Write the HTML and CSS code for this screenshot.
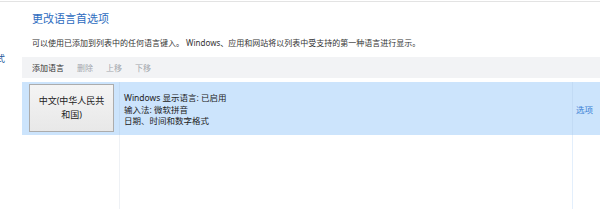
FILE: index.html
```html
<!DOCTYPE html>
<html lang="zh-CN">
<head>
    <meta charset="UTF-8">
    <meta name="viewport" content="width=device-width, initial-scale=1.0">
    <title>语言</title>
    <link rel="stylesheet" href="styles.css">
</head>
<body>
    <div class="page">
        <div class="side">
            <span class="side-item">式</span>
        </div>
        <div class="main">
            <h1 class="title">更改语言首选项</h1>
            <p class="desc">可以使用已添加到列表中的任何语言键入。 Windows、应用和网站将以列表中受支持的第一种语言进行显示。</p>

            <div class="toolbar">
                <span class="tool">添加语言</span>
                <span class="tool disabled">删除</span>
                <span class="tool disabled">上移</span>
                <span class="tool disabled">下移</span>
            </div>

            <div class="list">
                <div class="cell name selected">
                    <div class="lang-btn">中文(中华人民共和国)</div>
                </div>
                <div class="cell info selected">
                    <p>Windows 显示语言: 已启用</p>
                    <p>输入法: 微软拼音</p>
                    <p>日期、时间和数字格式</p>
                </div>
                <div class="cell opt selected">
                    <span class="link">选项</span>
                </div>

                <div class="cell name"></div>
                <div class="cell info"></div>
                <div class="cell opt"></div>
            </div>
        </div>
    </div>
</body>
</html>
```

FILE: styles.css
```css
*{
    padding: 0;
    margin: 0;
    box-sizing: border-box;
}
html, body{
    height: 100%;
    overflow: hidden;
}
body{
    background-color: #ffffff;
    font-family: "Noto Sans", "Noto Sans CJK SC", sans-serif;
    color: #2b2b2b;
}
.page{
    display: flex;
    height: 100%;
    margin-top: 1px;
    border-top: 1px solid #e3e3e3;
}
.side{
    width: 22px;
    flex-shrink: 0;
    overflow: hidden;
    padding-top: 50px;
}
.side-item{
    display: block;
    margin-left: -4px;
    font-size: 9px;
    color: #24569a;
    white-space: nowrap;
}
.main{
    flex: 1;
    display: flex;
    flex-direction: column;
    min-width: 0;
}
.title{
    font-size: 11px;
    font-weight: 400;
    color: #2d6cc0;
    line-height: 16px;
    padding: 9px 0 0 10px;
}
.desc{
    font-size: 8px;
    line-height: 12px;
    color: #333;
    padding: 10px 0 0 10px;
    white-space: nowrap;
}
.toolbar{
    display: flex;
    align-items: center;
    gap: 13px;
    height: 21px;
    margin-top: 8px;
    padding-left: 10px;
    background-color: #f2f3f5;
    font-size: 8px;
}
.tool{
    color: #333;
}
.tool.disabled{
    color: #a3a7ad;
}
.list{
    flex: 1;
    display: grid;
    grid-template-columns: 98px 453px 60px;
    grid-template-rows: 53px 1fr;
    margin-top: 4px;
}
.cell{
    border-right: 1px solid #eef1f5;
}
.cell.opt{
    border-right: none;
}
.cell.info{
    border-right: 1px solid #e3effc;
}
.cell.selected{
    background-color: #cce4fc;
}
.cell.name.selected{
    border-right-color: #c3dbf3;
}
.cell.info.selected{
    border-right-color: #c2dbf5;
}
.name.selected{
    padding: 2px 0 0 7px;
}
.lang-btn{
    width: 85px;
    height: 48px;
    display: flex;
    align-items: center;
    justify-content: center;
    text-align: center;
    padding: 0 6px;
    font-size: 9px;
    line-height: 14px;
    color: #222;
    background: linear-gradient(#f4f4f4, #e8e8e8);
    border: 1px solid #acacac;
}
.info{
    padding: 10px 0 0 4px;
    font-size: 8.5px;
    line-height: 11.5px;
    color: #222;
}
.opt.selected{
    display: flex;
    align-items: center;
    padding-left: 3px;
}
.link{
    font-size: 8.5px;
    color: #3a7fd5;
}
```
